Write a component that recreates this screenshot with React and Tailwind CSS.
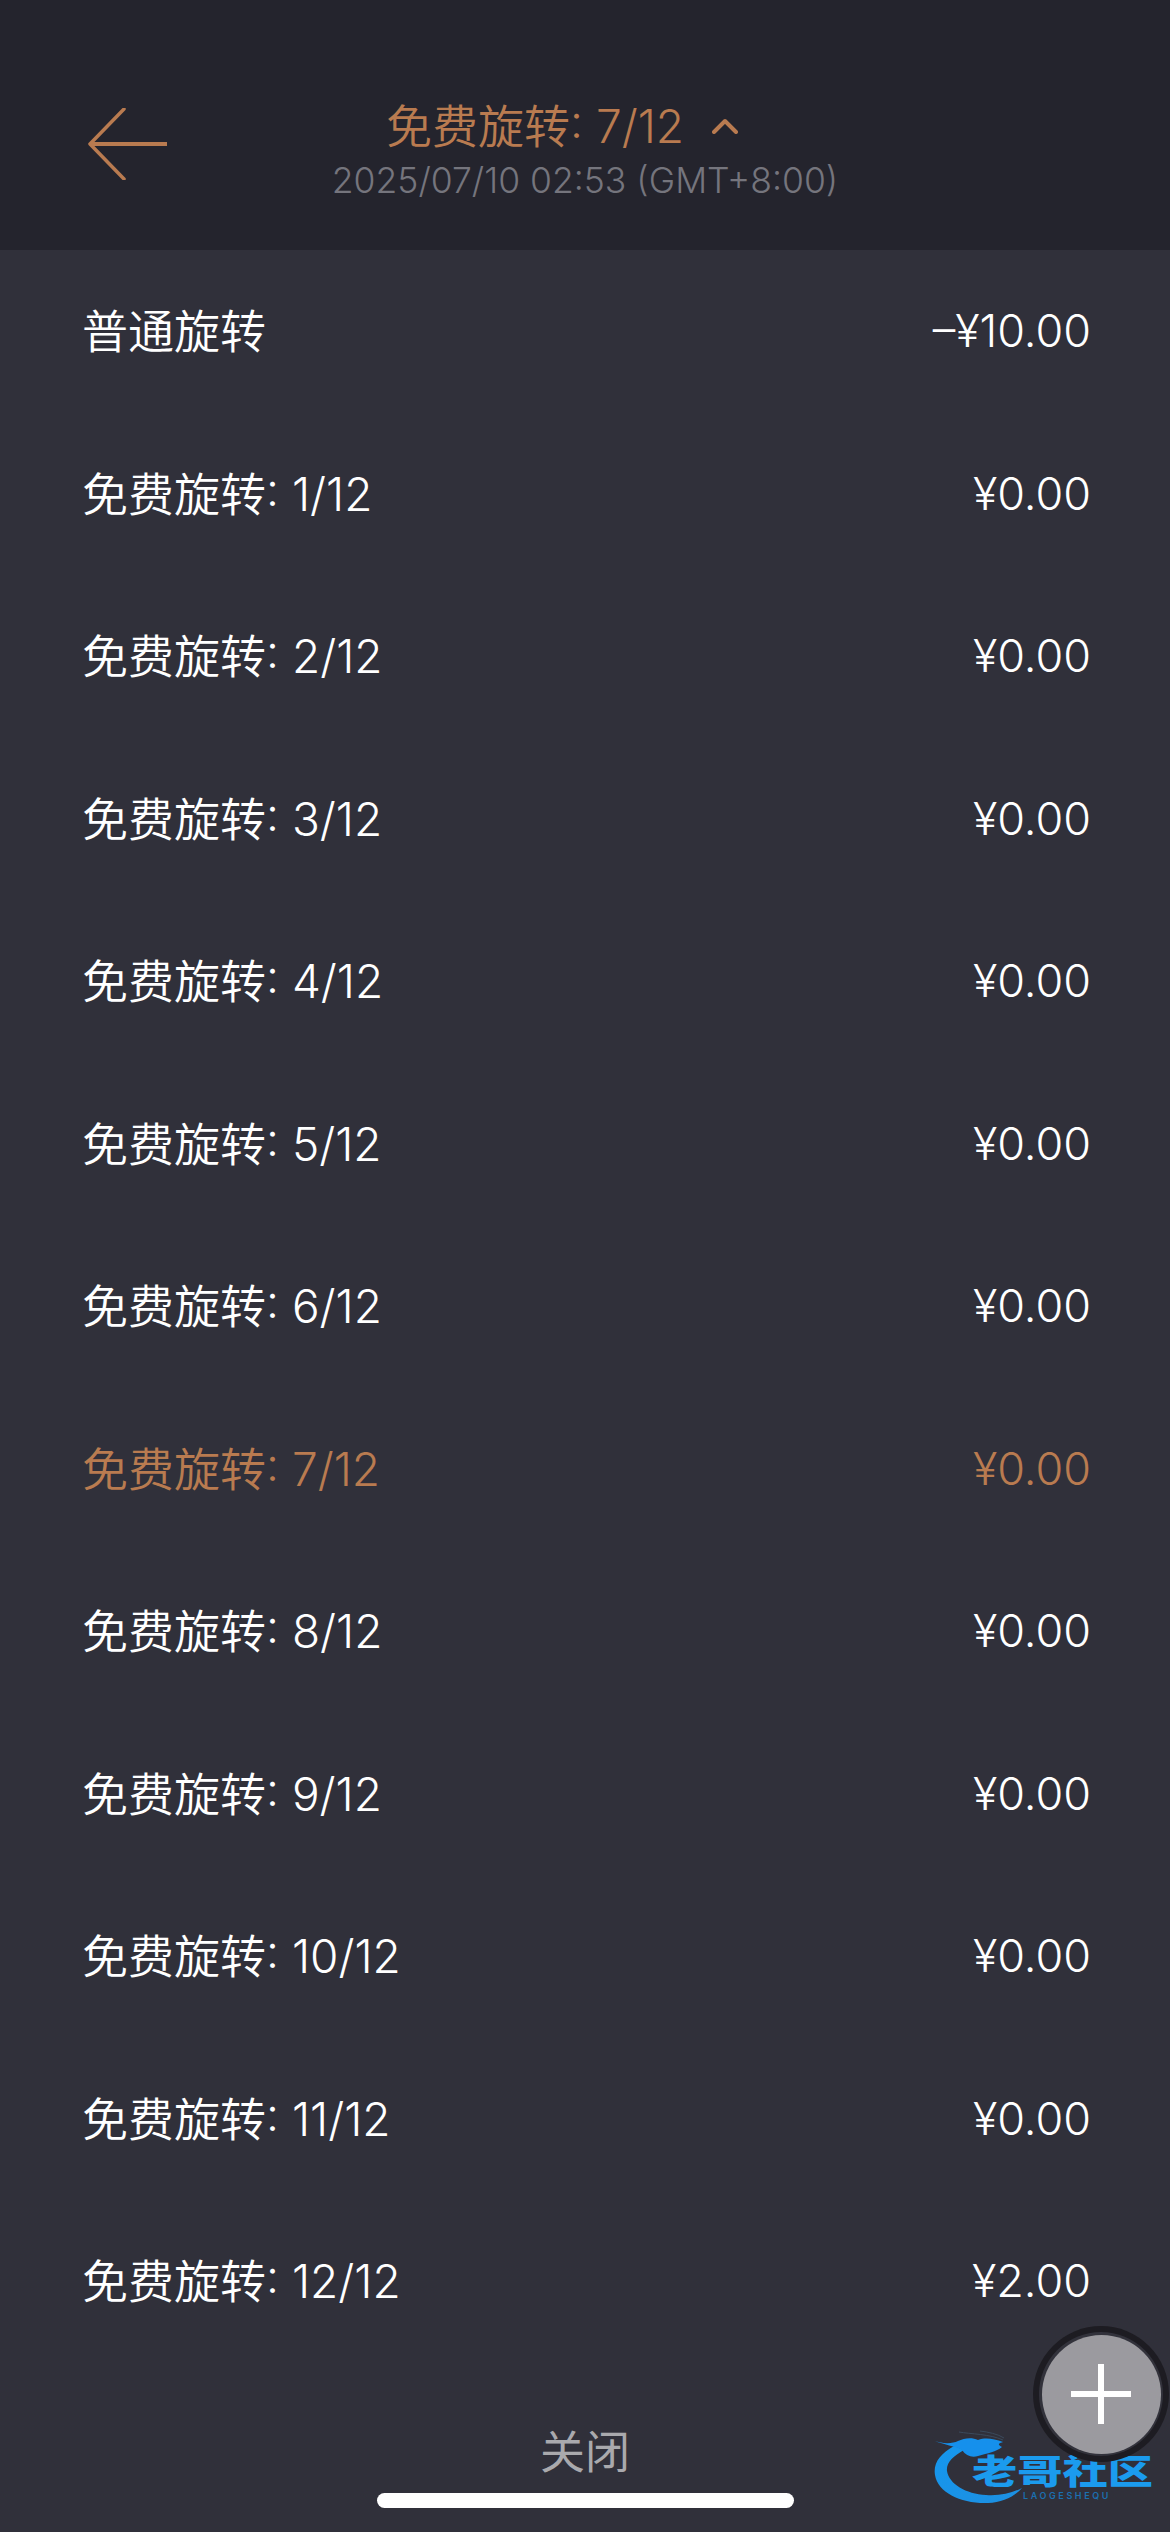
import React from "react";

const font = {
  fontFamily: '"Inter", "Noto Sans CJK SC", sans-serif',
};

const rows = [
  { label: "普通旋转", amount: "–¥10.00" },
  { label: "免费旋转: 1/12", amount: "¥0.00" },
  { label: "免费旋转: 2/12", amount: "¥0.00" },
  { label: "免费旋转: 3/12", amount: "¥0.00" },
  { label: "免费旋转: 4/12", amount: "¥0.00" },
  { label: "免费旋转: 5/12", amount: "¥0.00" },
  { label: "免费旋转: 6/12", amount: "¥0.00" },
  { label: "免费旋转: 7/12", amount: "¥0.00", active: true },
  { label: "免费旋转: 8/12", amount: "¥0.00" },
  { label: "免费旋转: 9/12", amount: "¥0.00" },
  { label: "免费旋转: 10/12", amount: "¥0.00" },
  { label: "免费旋转: 11/12", amount: "¥0.00" },
  { label: "免费旋转: 12/12", amount: "¥2.00" },
];

function BackArrow() {
  return (
    <svg width="80" height="72" viewBox="0 0 80 72" fill="none" stroke="#b97b50" strokeLinecap="round">
      <path d="M36 1 L2 36 L36 71" strokeWidth="3.5" strokeLinejoin="round" />
      <path d="M3 36 H79" strokeWidth="4" strokeLinecap="butt" />
    </svg>
  );
}

function Chevron() {
  return (
    <svg width="26" height="16" viewBox="0 0 26 16" fill="none" stroke="#b97b50" strokeWidth="4" strokeLinecap="round" strokeLinejoin="round">
      <path d="M2 14 L13 3 L24 14" />
    </svg>
  );
}

function DragonLogo() {
  return (
    <div className="absolute left-[932px] top-[2430px] w-[222px] h-[76px]">
      <svg className="absolute left-0 top-0" width="222" height="76" viewBox="0 0 222 76" fill="none">
        <defs>
          <linearGradient id="logoBlue" x1="0" y1="0" x2="1" y2="1">
            <stop offset="0" stopColor="#1597ee" />
            <stop offset="1" stopColor="#1d8fe0" />
          </linearGradient>
        </defs>
        {/* tail loop */}
        <path
          d="M22 16 C8 24 1 33 3 45 C6 63 30 74 56 73 C70 72 82 67 90 58 C80 63 68 66 54 65 C34 64 17 54 15 41 C14 33 21 26 32 20 Z"
          fill="url(#logoBlue)"
        />
        {/* head and body */}
        <path
          d="M0 10 C10 14 20 14 26 11 C32 8 40 7 46 10 C54 7 62 9 71 12 C68 13 64 14 70 17 C64 22 56 23 46 26 C40 28 34 26 30 20 C24 16 12 15 0 10 Z"
          fill="#1590ec"
        />
        <path d="M27 2 C38 4 58 4 71 10" stroke="#3b4a5c" strokeWidth="1" />
        <path d="M48 1 C56 2 66 4 72 8" stroke="#3b4a5c" strokeWidth="1" />
      </svg>
      <span className="absolute left-[40px] top-[26px] text-[34px] leading-[32px] font-black text-[#1b9bee] whitespace-nowrap origin-left scale-x-[1.33]">
        老哥社区
      </span>
      <span className="absolute left-[91px] top-[61px] text-[9px] leading-[10px] font-semibold text-[#1b6fb0] whitespace-nowrap tracking-[2.6px]">
        LAOGESHEQU
      </span>
    </div>
  );
}

function FloatingPlus() {
  return (
    <div className="absolute left-[1033px] top-[2326px] w-[136px] h-[136px] rounded-full bg-[#1d1c22] flex items-center justify-center">
      <div className="w-[124px] h-[124px] rounded-full bg-[#32323b] flex items-center justify-center">
        <div className="relative w-[119px] h-[119px] rounded-full bg-[#9b9a9f] flex items-center justify-center">
          <div className="w-[60px] h-[6px] bg-white" />
          <div className="absolute w-[6px] h-[60px] bg-white" />
        </div>
      </div>
    </div>
  );
}

export default function App() {
  return (
    <div className="relative w-[1170px] h-[2532px] bg-[#30303a] overflow-hidden flex flex-col" style={font}>
      <header className="h-[250px] bg-[#24242d] grid grid-cols-[1fr_auto_1fr] items-start pt-[102px]">
        <div className="pl-[88px] pt-[6px]">
          <BackArrow />
        </div>
        <div className="flex flex-col items-center">
          <div className="flex items-center gap-[28px] pr-[46px] h-[48px]">
            <span className="text-[46px] leading-[48px] font-[350] text-[#b97b50]">免费旋转: 7/12</span>
            <Chevron />
          </div>
          <span className="mt-[9px] text-[35.5px] leading-[44px] font-[350] text-[#75757d]">2025/07/10 02:53 (GMT+8:00)</span>
        </div>
        <div />
      </header>

      <main className="flex flex-col">
        {rows.map((row) => (
          <div
            key={row.label}
            className={`h-[162.5px] pl-[82px] pr-[79px] flex items-center justify-between text-[46px] leading-[54px] font-[350] ${
              row.active ? "text-[#b97b50]" : "text-white"
            }`}
          >
            <span>{row.label}</span>
            <span className="text-[45px]">{row.amount}</span>
          </div>
        ))}
      </main>

      <footer className="mt-auto flex flex-col items-center pb-[24px]">
        <span className="text-[45px] leading-[54px] text-[#a9a9ad]">关闭</span>
        <div className="mt-[13px] w-[417px] h-[15px] rounded-full bg-white" />
      </footer>

      <DragonLogo />
      <FloatingPlus />
    </div>
  );
}
